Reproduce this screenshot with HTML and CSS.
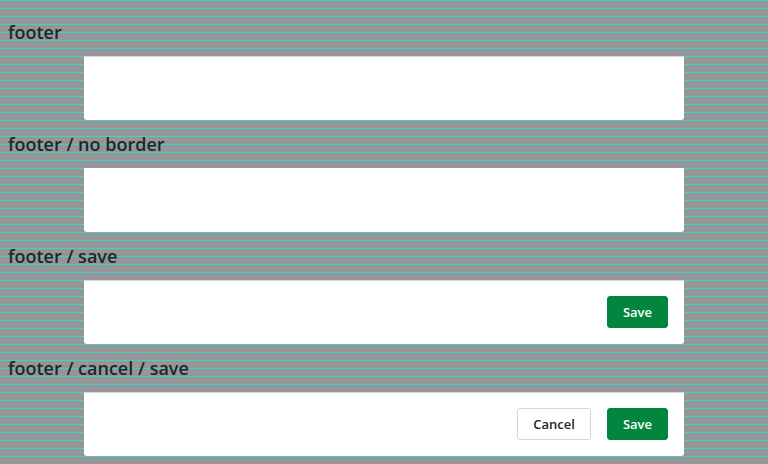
FILE: index.html
```html
<!DOCTYPE html>
<html lang="en">
<head>
<meta charset="utf-8">
<title>Footer</title>
<link rel="stylesheet" href="styles.css">
</head>
<body>
<section class="example">
<h2 class="title">footer</h2>
<footer class="footer bordered"></footer>
</section>
<section class="example">
<h2 class="title">footer / no border</h2>
<footer class="footer"></footer>
</section>
<section class="example">
<h2 class="title">footer / save</h2>
<footer class="footer bordered"><button class="button primary">Save</button></footer>
</section>
<section class="example">
<h2 class="title">footer / cancel / save</h2>
<footer class="footer bordered"><button class="button">Cancel</button><button class="button primary">Save</button></footer>
</section>
</body>
</html>
```
FILE: styles.css
```css
* {
  box-sizing: border-box;
}

body {
  margin: 0;
  padding: 8px;
  background: #969696 linear-gradient(to bottom, #40cfcb 1px, transparent 1px) 0 0 / 100% 8px;
  color: #252525;
  font-family: "Open Sans", sans-serif;
}

.example {
  height: 112px;
}

.title {
  margin: 0;
  height: 48px;
  font-size: 18px;
  font-weight: 600;
  line-height: 48px;
}

.footer {
  display: flex;
  align-items: center;
  justify-content: flex-end;
  gap: 16px;
  width: 600px;
  height: 64px;
  margin: 0 auto;
  padding: 0 16px;
  border-radius: 0 0 3px 3px;
  background: #fff;
}

.bordered {
  border-top: 1px solid #d5d5d5;
  padding-bottom: 1px;
}

.button {
  height: 32px;
  padding: 0 15px;
  border: 1px solid #d5d5d5;
  border-radius: 3px;
  background: #fff;
  color: #252525;
  font: 600 13px/30px "Open Sans", sans-serif;
}

.primary {
  border-color: #04853f;
  background: #04853f;
  color: #fff;
}
```
